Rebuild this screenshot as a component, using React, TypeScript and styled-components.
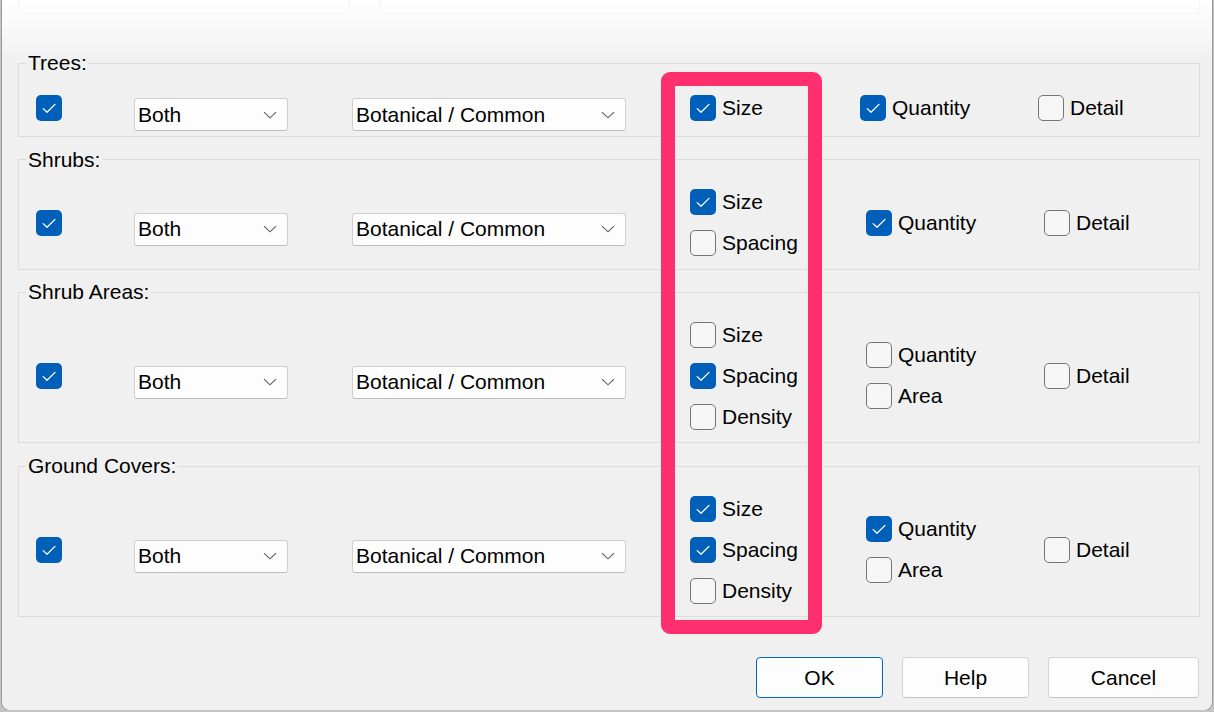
import React from 'react';
import styled, { createGlobalStyle } from 'styled-components';

const GlobalStyle = createGlobalStyle`
    html, body {
        margin: 0;
        padding: 0;
        background: #c4c4c4;
        font-family: "Liberation Sans", Arial, sans-serif;
        color: #000;
    }
`;

// Dialog shell
const Dialog = styled.div`
    position: relative;
    box-sizing: border-box;
    width: 1210px;
    height: 710px;
    margin-left: 2px;
    padding: 0 12px 0 16px;
    display: flex;
    flex-direction: column;
    background: linear-gradient(180deg, #ffffff 0px, #fbfbfb 20px, #f0f0f0 62px);
    border-radius: 0 0 8px 8px;
    box-shadow: -1px 0 0 #9a9a9a, 1px 0 0 #9a9a9a, 0 1px 0 #9a9a9a;
    overflow: hidden;
`;

const GhostStrip = styled.div`
    display: flex;
    gap: 30px;
    height: 14px;
    margin-bottom: 38px;
`;

const GhostBox = styled.div<{ $width?: number }>`
    box-sizing: border-box;
    height: 14px;
    ${p => (p.$width ? `width: ${p.$width}px;` : 'flex: 1;')}
    border: 1px solid #f6f6f6;
    border-top: none;
`;

const Groups = styled.div`
    display: flex;
    flex-direction: column;
    gap: 11.7px;
`;

const Group = styled.fieldset`
    margin: 0;
    min-width: 0;
    padding: 11px 0 5px 0;
    border: 1px solid #dcdcdc;
`;

const Legend = styled.legend`
    margin-left: 7px;
    padding: 0 2px;
    font-size: 21px;
    line-height: 22px;
`;

const Row = styled.div<{ $narrow?: boolean }>`
    display: grid;
    grid-template-columns: 98px 218px 338px ${p => (p.$narrow ? 170 : 176)}px 178px 1fr;
    align-items: center;
    min-height: 44px;
    padding-left: 17px;
`;

const Stack = styled.div`
    display: flex;
    flex-direction: column;
`;

const Option = styled.label`
    display: flex;
    align-items: center;
    gap: 6px;
    height: 41px;
    font-size: 21px;
    white-space: nowrap;
`;

const Box = styled.span<{ $checked?: boolean }>`
    box-sizing: border-box;
    display: inline-flex;
    align-items: center;
    justify-content: center;
    width: 26px;
    height: 26px;
    flex: none;
    border-radius: 5px;
    background: ${p => (p.$checked ? '#005fb8' : '#f6f6f6')};
    border: ${p => (p.$checked ? 'none' : '1.5px solid #747474')};
`;

const Select = styled.div<{ $width: number }>`
    box-sizing: border-box;
    display: flex;
    align-items: center;
    justify-content: space-between;
    width: ${p => p.$width}px;
    height: 33px;
    margin-top: 13px;
    padding: 0 10px 0 3px;
    background: #fdfdfd;
    border: 1px solid #cfcfcf;
    border-bottom-color: #bdbdbd;
    border-radius: 3px;
    font-size: 21px;
    white-space: nowrap;
`;

const Footer = styled.div`
    display: flex;
    justify-content: flex-end;
    gap: 19px;
    margin-top: 40px;
    padding-right: 1px;
`;

const Button = styled.button<{ $primary?: boolean; $width: number }>`
    box-sizing: border-box;
    width: ${p => p.$width}px;
    height: 41px;
    background: #fdfdfd;
    border: 1px solid ${p => (p.$primary ? '#0067c0' : '#d3d3d3')};
    border-bottom-color: ${p => (p.$primary ? '#0067c0' : '#c2c2c2')};
    border-radius: 4px;
    font-family: "Liberation Sans", Arial, sans-serif;
    font-size: 21px;
    color: #000;
    padding: 0;
`;

// Pink callout drawn over the size/spacing column
const Highlight = styled.div`
    position: absolute;
    left: 659px;
    top: 72px;
    width: 161px;
    height: 562px;
    box-sizing: border-box;
    border: 14px solid #fe2f6f;
    border-radius: 9px;
    pointer-events: none;
`;

const Check = ({ checked }: { checked?: boolean }) => (
    <Box $checked={checked}>
        {checked && (
            <svg width="26" height="26" viewBox="0 0 26 26">
                <path d="M7.2 13.6 L11 17.2 L19 9.4" fill="none" stroke="#fff" strokeWidth="1.3" strokeLinecap="round" strokeLinejoin="round" />
            </svg>
        )}
    </Box>
);

const Chevron = () => (
    <svg width="14" height="8" viewBox="0 0 14 8">
        <path d="M1 1.2 L7 6.8 L13 1.2" fill="none" stroke="#5c5c5c" strokeWidth="1.1" />
    </svg>
);

type Item = { label: string; checked: boolean };

type GroupData = {
    title: string;
    sizes: Item[];
    amounts: Item[];
    narrow?: boolean;
};

const groups: GroupData[] = [
    {
        title: 'Trees:',
        narrow: true,
        sizes: [{ label: 'Size', checked: true }],
        amounts: [{ label: 'Quantity', checked: true }],
    },
    {
        title: 'Shrubs:',
        sizes: [
            { label: 'Size', checked: true },
            { label: 'Spacing', checked: false },
        ],
        amounts: [{ label: 'Quantity', checked: true }],
    },
    {
        title: 'Shrub Areas:',
        sizes: [
            { label: 'Size', checked: false },
            { label: 'Spacing', checked: true },
            { label: 'Density', checked: false },
        ],
        amounts: [
            { label: 'Quantity', checked: false },
            { label: 'Area', checked: false },
        ],
    },
    {
        title: 'Ground Covers:',
        sizes: [
            { label: 'Size', checked: true },
            { label: 'Spacing', checked: true },
            { label: 'Density', checked: false },
        ],
        amounts: [
            { label: 'Quantity', checked: true },
            { label: 'Area', checked: false },
        ],
    },
];

const App = () => (
    <>
        <GlobalStyle />
        <Dialog>
            <GhostStrip>
                <GhostBox $width={332} />
                <GhostBox />
            </GhostStrip>
            <Groups>
                {groups.map(g => (
                    <Group key={g.title}>
                        <Legend>{g.title}</Legend>
                        <Row $narrow={g.narrow}>
                            <Check checked />
                            <Select $width={154}>
                                <span>Both</span>
                                <Chevron />
                            </Select>
                            <Select $width={274}>
                                <span>Botanical / Common</span>
                                <Chevron />
                            </Select>
                            <Stack>
                                {g.sizes.map(s => (
                                    <Option key={s.label}>
                                        <Check checked={s.checked} />
                                        {s.label}
                                    </Option>
                                ))}
                            </Stack>
                            <Stack>
                                {g.amounts.map(a => (
                                    <Option key={a.label}>
                                        <Check checked={a.checked} />
                                        {a.label}
                                    </Option>
                                ))}
                            </Stack>
                            <Option>
                                <Check />
                                Detail
                            </Option>
                        </Row>
                    </Group>
                ))}
            </Groups>
            <Footer>
                <Button $primary $width={127}>OK</Button>
                <Button $width={127}>Help</Button>
                <Button $width={151}>Cancel</Button>
            </Footer>
            <Highlight />
        </Dialog>
    </>
);

export default App;
